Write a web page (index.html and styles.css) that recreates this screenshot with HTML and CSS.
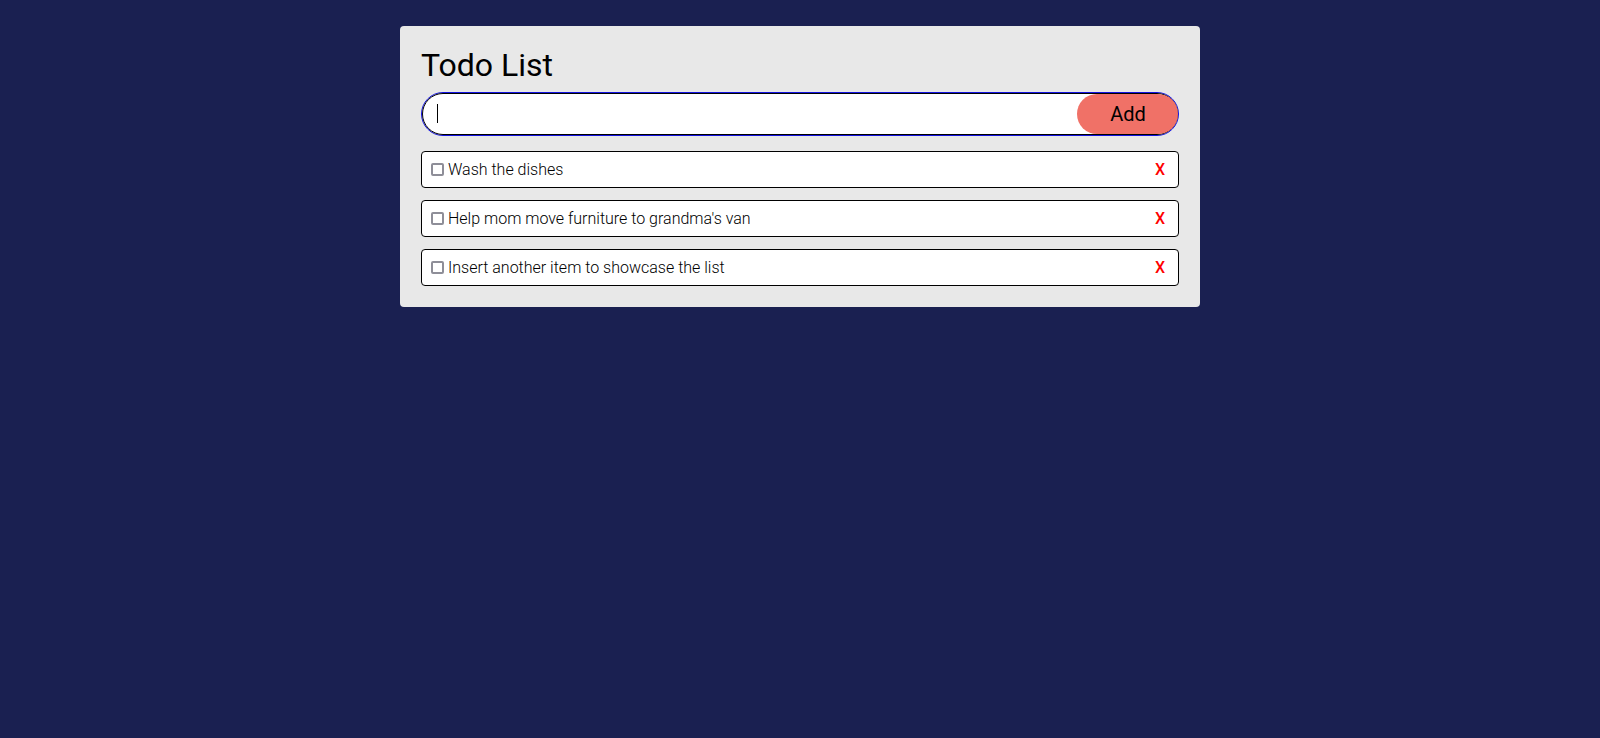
FILE: index.html
```html
<!DOCTYPE html>
<html>
<head>
<meta charset="utf-8">
<link rel="stylesheet" href="styles.css">
</head>
<body>
<div class="card">
  <h1 class="title">Todo List</h1>
  <form class="add-form">
    <input class="add-input" type="text" value="">
    <span class="caret"></span>
    <button class="add-btn" type="button">Add</button>
  </form>
  <ul class="list">
    <li class="item"><input type="checkbox" class="check"><span class="label">Wash the dishes</span><button class="del" type="button">X</button></li>
    <li class="item"><input type="checkbox" class="check"><span class="label">Help mom move furniture to grandma's van</span><button class="del" type="button">X</button></li>
    <li class="item"><input type="checkbox" class="check"><span class="label">Insert another item to showcase the list</span><button class="del" type="button">X</button></li>
  </ul>
</div>
</body>
</html>
```
FILE: styles.css
```css
html, body {
  margin: 0;
  padding: 0;
  background: #1a2051;
  font-family: Roboto, "Liberation Sans", sans-serif;
}
body {
  padding-top: 26px;
}
.card {
  width: 800px;
  box-sizing: border-box;
  margin: 0 auto;
  background: #e8e8e8;
  border-radius: 4px;
  padding: 21px;
}
.title {
  margin: 0 0 8px 0;
  font-size: 32px;
  font-weight: 400;
  color: #000;
  line-height: 37px;
}
.add-form {
  position: relative;
  display: flex;
  height: 44px;
  box-sizing: border-box;
  border: 1px solid #1414e0;
  border-radius: 22px;
  margin: 0;
}
.add-input {
  flex: 1;
  box-sizing: border-box;
  height: 42px;
  border: 1px solid #000;
  border-radius: 21px;
  padding: 0 16px;
  font-size: 16px;
  font-family: inherit;
  outline: none;
  background: #fff;
}
.caret {
  position: absolute;
  left: 15px;
  top: 11px;
  width: 1px;
  height: 19px;
  background: #000;
}
.add-btn {
  position: absolute;
  right: 0;
  top: 1px;
  height: 40px;
  width: 101px;
  border: none;
  border-radius: 20px;
  background: #f07167;
  color: #000;
  font-family: inherit;
  font-size: 20px;
  padding: 0 0 0 1px;
  cursor: pointer;
}
.list {
  list-style: none;
  margin: 15px 0 0 0;
  padding: 0;
  display: flex;
  flex-direction: column;
  gap: 12px;
}
.item {
  display: flex;
  align-items: center;
  height: 37px;
  box-sizing: border-box;
  border: 1px solid #000;
  border-radius: 4px;
  background: #fff;
  padding: 0 13px 0 6px;
  font-size: 16px;
  font-weight: 300;
  color: #000;
}
.check {
  -webkit-appearance: none;
  appearance: none;
  box-sizing: border-box;
  margin: 0 4px 0 3px;
  width: 13px;
  height: 13px;
  border: 2px solid #8e8e98;
  border-radius: 2px;
  background: #fff;
}
.label {
  flex: 1;
}
.del {
  border: none;
  background: none;
  color: #ff0000;
  font-family: inherit;
  font-size: 16px;
  font-weight: 500;
  padding: 0;
  cursor: pointer;
}
```
